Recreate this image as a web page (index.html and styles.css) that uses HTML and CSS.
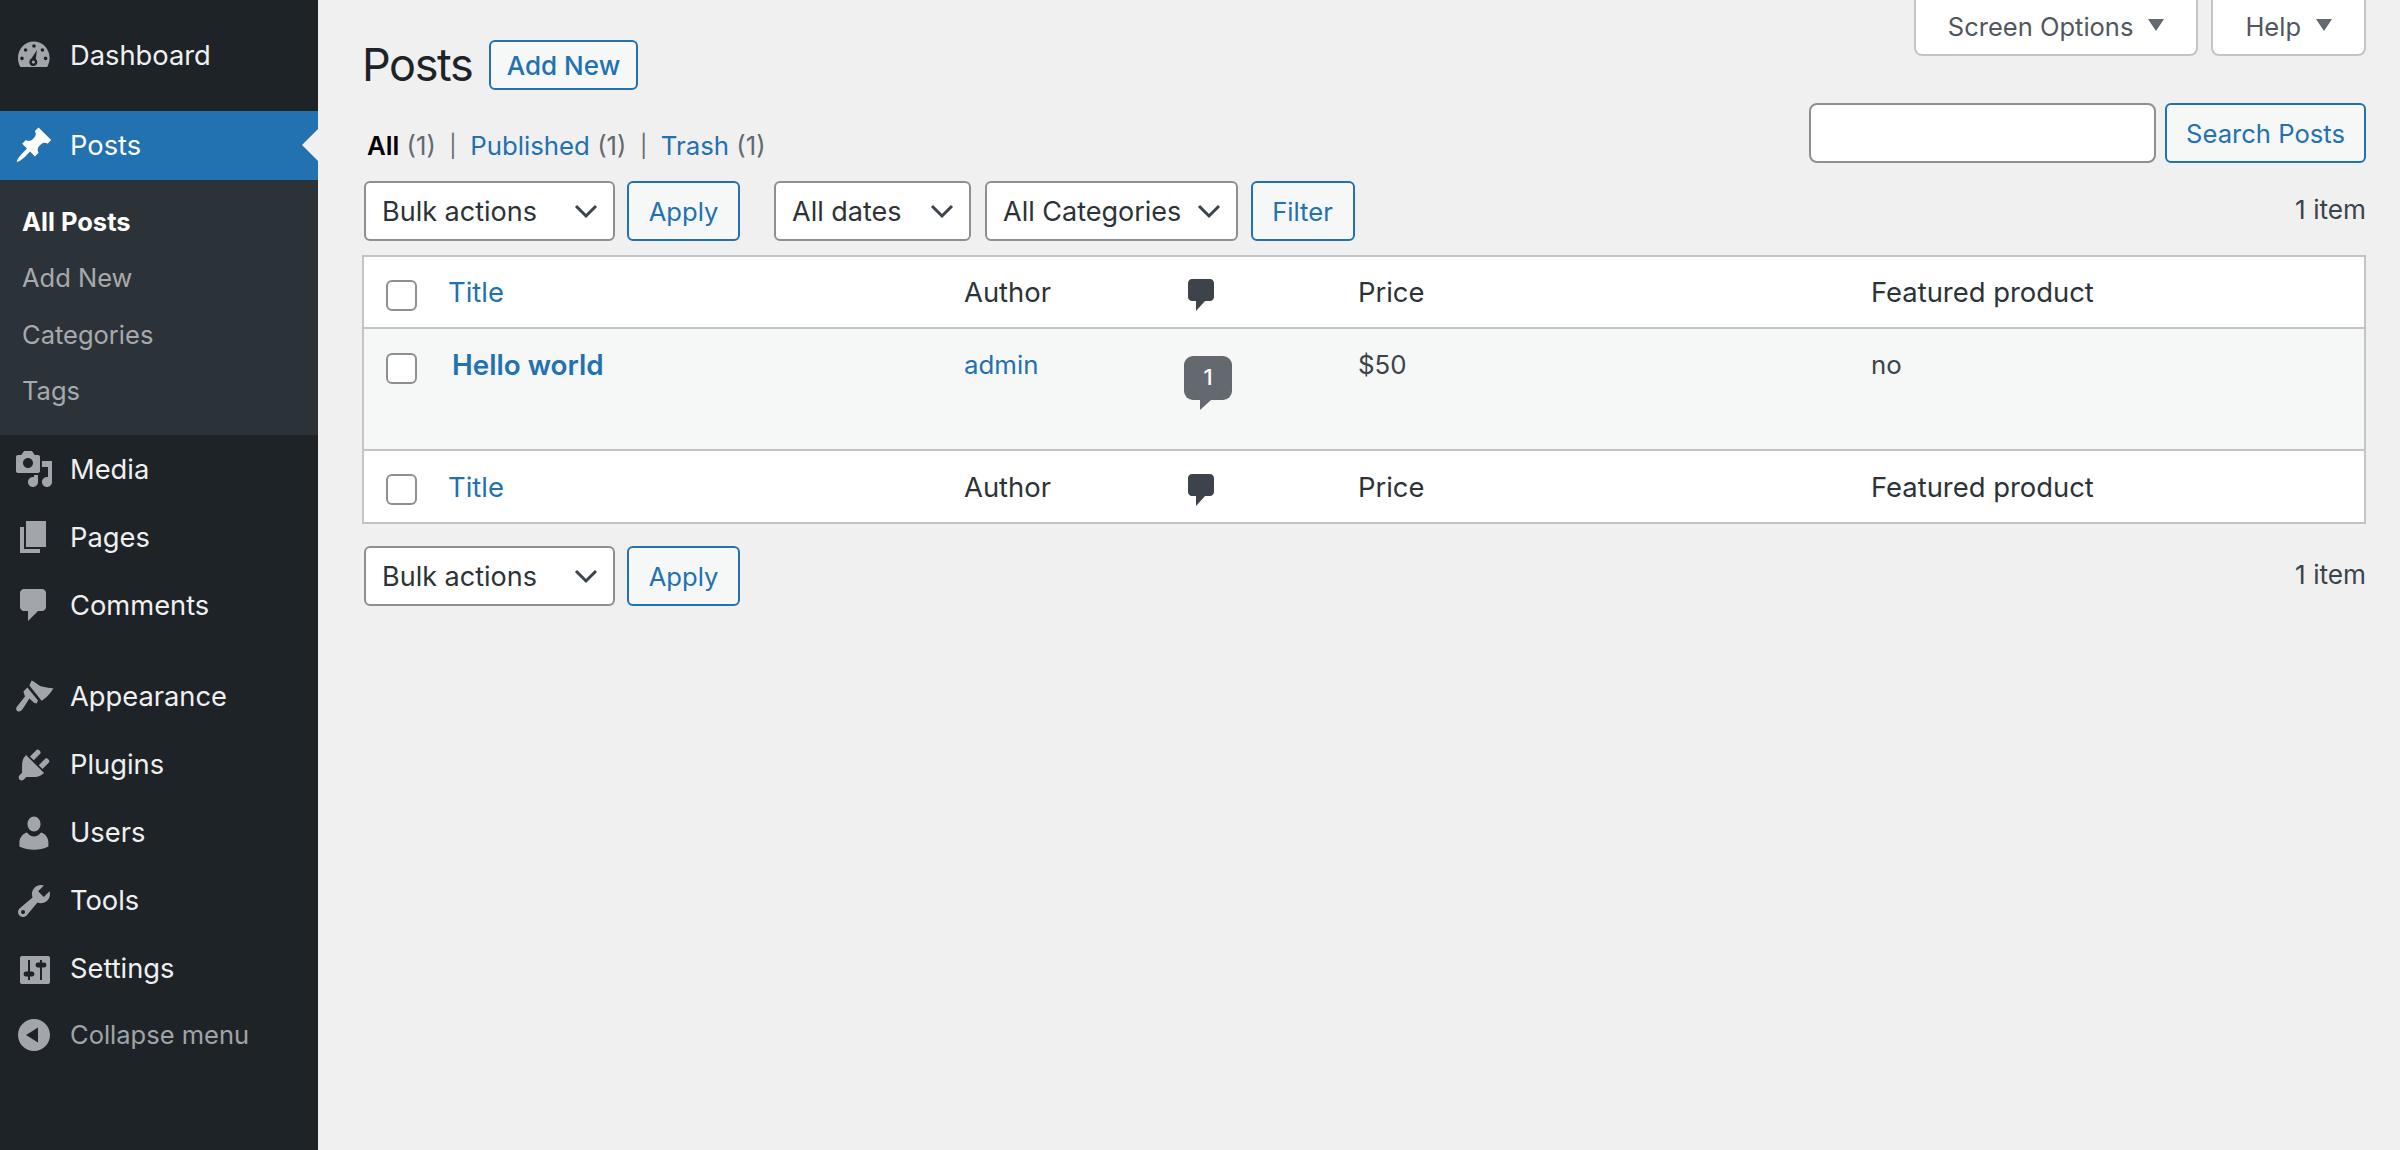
FILE: index.html
```html
<!DOCTYPE html>
<html lang="en">
<head>
<meta charset="utf-8">
<title>Posts</title>
<link rel="stylesheet" href="styles.css">
</head>
<body>
<div class="layout">
  <nav class="sidebar">
    <ul class="menu menu-top">
      <li class="menu-item"><svg class="ico" viewBox="0 0 20 20"><path fill-rule="evenodd" d="M3.200 15.500C2.400 14.200 2 12.700 2 11 2 6.500 5.500 2.800 9.900 2.800S17.800 6.500 17.800 11C17.800 12.700 17.300 14.200 16.600 15.500zM10 4.100a.9.9 0 1 0 0 1.800.9.9 0 0 0 0-1.800zM5.800 6.100a.9.9 0 1 0 0 1.800.9.9 0 0 0 0-1.800zM14.200 6.100a.9.9 0 1 0 0 1.800.9.9 0 0 0 0-1.800zM4 10.300a.9.9 0 1 0 0 1.800.9.9 0 0 0 0-1.800zM15.800 10.300a.9.9 0 1 0 0 1.800.9.9 0 0 0 0-1.800zM11.500 7L10.900 11.500A2 2 0 1 1 8.700 11.300zM9.700 12.200a.8.8 0 1 0 0 1.600.8.8 0 0 0 0-1.600z"/></svg><span>Dashboard</span></li>
    </ul>
    <div class="menu-current">
      <div class="menu-item current"><svg class="ico" viewBox="0 0 20 20"><path d="M10.440 3.020l1.820-1.820 6.360 6.350-1.830 1.820c-1.050-.68-2.480-.57-3.410.36l-.75.75c-.92.930-1.040 2.350-.35 3.410l-1.830 1.820-2.410-2.410-2.800 2.790c-.42.420-3.380 2.710-3.800 2.290s1.860-3.390 2.280-3.810l2.790-2.790L4.100 9.360l1.830-1.820c1.050.69 2.480.57 3.400-.36l.75-.75c.93-.92 1.050-2.350.36-3.410z"/></svg><span>Posts</span></div>
      <ul class="submenu">
        <li class="sub-active">All Posts</li>
        <li>Add New</li>
        <li>Categories</li>
        <li>Tags</li>
      </ul>
    </div>
    <ul class="menu">
      <li class="menu-item"><svg class="ico" viewBox="0 0 20 20"><path d="M13 11V4c0-.55-.45-1-1-1h-1.670L9 1H5L3.670 3H2c-.55 0-1 .45-1 1v7c0 .55.45 1 1 1h10c.55 0 1-.45 1-1zM7 4.500c1.380 0 2.500 1.120 2.500 2.500S8.380 9.500 7 9.500 4.500 8.380 4.500 7 5.620 4.500 7 4.500zM14 6h5v10.500c0 1.380-1.120 2.500-2.500 2.500S14 17.880 14 16.500s1.120-2.500 2.500-2.500c.17 0 .34.020.5.050V9h-3V6zm-4 8.050V13h2v3.500c0 1.380-1.120 2.500-2.500 2.500S7 17.880 7 16.500 8.120 14 9.500 14c.17 0 .34.020.5.050z"/></svg><span>Media</span></li>
      <li class="menu-item"><svg class="ico" viewBox="0 0 20 20"><path d="M6 15V2h10v13H6zm-1 1h8v2H3V5h2v11z"/></svg><span>Pages</span></li>
      <li class="menu-item"><svg class="ico" viewBox="0 0 20 20"><path d="M5 2h9c1.100 0 2 .9 2 2v7c0 1.100-.9 2-2 2h-2l-5 5v-5H5c-1.100 0-2-.9-2-2V4c0-1.100.9-2 2-2z"/></svg><span>Comments</span></li>
    </ul>
    <ul class="menu menu-second">
      <li class="menu-item"><svg class="ico" viewBox="0 0 20 20"><path d="M8.800 1.800C11 2.800 12.500 4.800 14.700 4.900 16.500 5.300 18.200 5.700 19.700 5.600 18.500 8 16 10.500 13.800 11.900L7.700 4.300zM6.700 5.200L12 11.800 11.300 13.300 10 12.900 7.700 10.800 4.500 15.800C3.800 16.900 2.800 17.500 1.900 17.200 1 16.800.8 15.700 1.400 14.900L5.500 9.800 4.700 7.300z"/></svg><span>Appearance</span></li>
      <li class="menu-item"><svg class="ico" viewBox="0 0 20 20"><path d="M13.110 4.360L9.870 7.600 8 5.730l3.240-3.240c.35-.34 1.050-.2 1.560.32.52.51.66 1.210.31 1.550zm-8 1.770l.91-1.120 9.010 9.010-1.190.84c-.71.71-2.630 1.160-3.820 1.160H6.140L4.900 17.260c-.59.59-1.540.59-2.120 0-.59-.58-.59-1.530 0-2.120l1.240-1.240v-3.880c0-1.130.4-3.050 1.090-3.890zm7.260 3.970l3.240-3.240c.34-.35 1.040-.21 1.550.31.52.51.66 1.210.32 1.560l-3.240 3.240z"/></svg><span>Plugins</span></li>
      <li class="menu-item"><svg class="ico" viewBox="0 0 20 20"><ellipse cx="10" cy="5.500" rx="3.300" ry="3.700"/><path d="M2.700 16.800V14.800C2.700 12.300 4.500 10.400 6.500 9.800 7.500 11.100 8.700 11.800 10 11.800S12.500 11.100 13.500 9.800C15.500 10.400 17.200 12.300 17.200 14.800V16.800C15 17.900 12.500 18.400 10 18.400S5 17.900 2.700 16.800z"/></svg><span>Users</span></li>
      <li class="menu-item"><svg class="ico" viewBox="0 0 20 20"><path d="M16.680 9.770c-1.340 1.340-3.300 1.670-4.950.99l-5.410 6.520c-.99.99-2.590.99-3.580 0s-.99-2.590 0-3.580l6.520-5.410c-.68-1.650-.35-3.610.99-4.950 1.280-1.280 3.120-1.620 4.720-1.060l-2.890 2.890 2.820 2.820 2.860-2.870c.53 1.580.18 3.390-1.080 4.650zM3.810 16.210c.4.39 1.040.39 1.430 0 .4-.4.4-1.040 0-1.430-.39-.4-1.030-.4-1.430 0-.39.39-.39 1.030 0 1.430z"/></svg><span>Tools</span></li>
      <li class="menu-item"><svg class="ico" viewBox="0 0 20 20"><path fill-rule="evenodd" d="M4 3.500h13c.6 0 1 .4 1 1v12c0 .6-.4 1-1 1H4c-.6 0-1-.4-1-1v-12c0-.6.4-1 1-1zM7 5.500h1v5.800h1c.8 0 1.200.5 1.200 1.200S9.800 13.700 9 13.700H8v1.800H7v-1.800H6c-.8 0-1.200-.5-1.200-1.200s.4-1.200 1.200-1.200h1zM13 5.500h1v1.300h1c.8 0 1.200.5 1.200 1.200s-.4 1.200-1.200 1.200h-1v6.300h-1V9.200h-1c-.8 0-1.200-.5-1.200-1.200s.4-1.200 1.200-1.200h1z"/></svg><span>Settings</span></li>
      <li class="menu-item collapse"><svg class="ico" viewBox="0 0 20 20"><path fill-rule="evenodd" d="M18 10c0-4.420-3.580-8-8-8s-8 3.580-8 8 3.580 8 8 8 8-3.580 8-8zm-6-3.800v7.600L6 10z"/></svg><span>Collapse menu</span></li>
    </ul>
  </nav>

  <main class="wrap">
    <div class="screen-meta">
      <div class="meta-tab">Screen Options<i class="tri"></i></div>
      <div class="meta-tab">Help<i class="tri"></i></div>
    </div>
    <div class="title-row">
      <h1>Posts</h1>
      <a class="btn btn-add">Add New</a>
    </div>
    <div class="filter-row">
      <ul class="subsub">
        <li><b>All</b> <span>(1)</span></li>
        <li class="sep">|</li>
        <li><a>Published</a> <span>(1)</span></li>
        <li class="sep">|</li>
        <li><a>Trash</a> <span>(1)</span></li>
      </ul>
      <div class="search">
        <input class="search-input" type="search" aria-label="Search Posts">
        <button class="btn btn-search">Search Posts</button>
      </div>
    </div>
    <div class="tablenav tablenav-top">
      <select class="sel sel-bulk"><option>Bulk actions</option></select>
      <button class="btn btn-apply">Apply</button>
      <select class="sel sel-dates"><option>All dates</option></select>
      <select class="sel sel-cats"><option>All Categories</option></select>
      <button class="btn btn-filter">Filter</button>
      <span class="count">1 item</span>
    </div>
    <table class="posts">
      <colgroup>
        <col class="c-cb"><col class="c-title"><col class="c-author"><col class="c-comments"><col class="c-price"><col class="c-feat">
      </colgroup>
      <thead>
        <tr class="head-row">
          <th class="cb"><input class="check" type="checkbox" aria-label="Select all"></th>
          <th><a>Title</a></th>
          <th>Author</th>
          <th><svg class="cmt" viewBox="0 0 26 32"><path d="M4 0h18c2.200 0 4 1.800 4 4v14c0 2.200-1.800 4-4 4h-5l-9 10V22H4c-2.200 0-4-1.800-4-4V4C0 1.800 1.800 0 4 0z"/></svg></th>
          <th>Price</th>
          <th>Featured product</th>
        </tr>
      </thead>
      <tbody>
        <tr class="body-row">
          <td class="cb"><input class="check" type="checkbox" aria-label="Select Hello world"></td>
          <td><a class="post-title">Hello world</a></td>
          <td><a>admin</a></td>
          <td><span class="bubble">1</span></td>
          <td>$50</td>
          <td>no</td>
        </tr>
      </tbody>
      <tfoot>
        <tr class="foot-row">
          <th class="cb"><input class="check" type="checkbox" aria-label="Select all"></th>
          <th><a>Title</a></th>
          <th>Author</th>
          <th><svg class="cmt" viewBox="0 0 26 32"><path d="M4 0h18c2.200 0 4 1.800 4 4v14c0 2.200-1.800 4-4 4h-5l-9 10V22H4c-2.200 0-4-1.800-4-4V4C0 1.800 1.800 0 4 0z"/></svg></th>
          <th>Price</th>
          <th>Featured product</th>
        </tr>
      </tfoot>
    </table>
    <div class="tablenav tablenav-bottom">
      <select class="sel sel-bulk"><option>Bulk actions</option></select>
      <button class="btn btn-apply">Apply</button>
      <span class="count">1 item</span>
    </div>
  </main>
</div>
</body>
</html>
```

FILE: styles.css
```css
* { box-sizing: border-box; }
html, body { margin: 0; height: 100%; }
body {
  background: #f0f0f1;
  color: #3c434a;
  font-family: Inter, "Liberation Sans", sans-serif;
  font-size: 25.6px;
  overflow: hidden;
}
ul { list-style: none; margin: 0; padding: 0; }
a { color: #2271b1; }

.layout { display: flex; height: 1150px; }

/* Sidebar */
.sidebar {
  flex: 0 0 318px;
  background: #1d2327;
  color: #f0f0f1;
  padding-top: 22px;
}
.menu-top { margin-bottom: 20.9px; }
.menu-item {
  display: flex;
  align-items: center;
  height: 68.1px;
  padding-left: 14px;
  font-size: 27.3px;
  line-height: 1;
}
.ico { width: 40px; height: 40px; flex: none; margin-right: 16px; fill: #a2a6aa; }
.current { position: relative; height: 69px; background: #2271b1; color: #fff; }
.current .ico { fill: #fff; }
.current::after {
  content: "";
  position: absolute;
  right: 0;
  top: 50%;
  margin-top: -16px;
  border: 16px solid transparent;
  border-right-color: #f0f0f1;
  border-left-width: 0;
}
.submenu { background: #2c3338; padding: 14px 0 16px; color: #a7aaad; font-size: 25.5px; }
.submenu li { height: 56.3px; line-height: 56px; padding-left: 22px; }
.sub-active { color: #fff; font-weight: 700; }
.menu-second { margin-top: 23px; }
.collapse { color: #a0a4a8; font-size: 25.5px; margin-top: -2px; }

/* Main */
.wrap { flex: 1; min-width: 0; padding: 0 34px 0 44px; }
.screen-meta { float: right; display: flex; gap: 13px; }
.meta-tab {
  display: flex;
  align-items: center;
  height: 57px;
  margin-top: -1px;
  padding: 0 32px;
  background: #fff;
  border: 2px solid #c3c4c7;
  border-top: 0;
  border-radius: 0 0 8px 8px;
  color: #50575e;
  font-size: 25.5px;
}
.tri {
  margin-left: 15px;
  margin-top: -4px;
  border-style: solid;
  border-width: 12px 8px 0;
  border-color: #646970 transparent transparent;
}
.title-row { display: flex; align-items: center; padding-top: 40px; height: 90px; }
h1 { margin: 0 18px 0 0; width: 109px; font-size: 45px; font-weight: 400; color: #1d2327; line-height: 50px; letter-spacing: -1.4px; }
.btn {
  display: inline-flex;
  align-items: center;
  justify-content: center;
  background: #f6f7f7;
  border: 2px solid #2271b1;
  border-radius: 6px;
  color: #2271b1;
  font: inherit;
  padding: 0;
}
.btn-add { width: 149px; height: 50px; font-size: 26px; font-weight: 500; }
.filter-row { display: flex; justify-content: space-between; margin-top: 13px; height: 60px; }
.subsub { display: flex; gap: 13.5px; align-self: flex-start; margin: 25px 0 0 5px; line-height: 36px; color: #646970; font-size: 25.8px; }
.subsub b { color: #000; font-weight: 600; }
.subsub .sep { color: #646970; font-size: 22px; }
.search { display: flex; gap: 9px; }
.search-input {
  width: 347px;
  height: 60px;
  background: #fff;
  border: 2px solid #8c8f94;
  border-radius: 8px;
  margin: 0;
}
.btn-search { width: 201px; height: 60px; }
.tablenav { display: flex; align-items: center; height: 60px; }
.tablenav-top { margin-top: 18px; }
.tablenav-bottom { margin-top: 22px; }
.sel {
  appearance: none;
  -webkit-appearance: none;
  height: 60px;
  background: #fff url("data:image/svg+xml;utf8,<svg xmlns='http://www.w3.org/2000/svg' viewBox='0 0 24 24'><path d='M2 7l10 10L22 7' fill='none' stroke='%233c434a' stroke-width='3'/></svg>") no-repeat right 15px center / 24px 24px;
  border: 2px solid #8c8f94;
  border-radius: 6px;
  color: #2c3338;
  font: inherit;
  font-size: 27px;
  padding: 0 0 0 16px;
  margin: 0;
}
.sel-bulk { width: 251px; margin-left: 2px; }
.btn-apply { width: 113px; height: 60px; margin-left: 12px; }
.sel-dates { width: 197px; margin-left: 34px; }
.sel-cats { width: 253px; margin-left: 14px; }
.btn-filter { width: 104px; height: 60px; margin-left: 12.5px; }
.count { margin-left: auto; font-size: 26.2px; position: relative; top: -2px; }

.posts {
  width: 2004px;
  margin-top: 14px;
  table-layout: fixed;
  border-collapse: separate;
  border-spacing: 0;
  background: #fff;
  border: 2px solid #c3c4c7;
}
.c-cb { width: 68px; }
.c-title { width: 516px; }
.c-author { width: 220px; }
.c-comments { width: 174px; }
.c-price { width: 513px; }
.posts th, .posts td { padding: 0 0 0 16px; text-align: left; font-weight: 400; }
.posts th { color: #2c3338; font-size: 27.4px; }
.posts .cb { padding-left: 22px; }
.head-row { height: 72px; }
.foot-row { height: 73px; }
thead th { border-bottom: 2px solid #c3c4c7; }
tfoot th { border-top: 2px solid #c3c4c7; padding-top: 3px; }
.body-row { height: 120px; background: #f6f7f7; }
.body-row td { vertical-align: top; padding-top: 16px; line-height: 40px; font-size: 25.8px; }
.posts .body-row .cb { padding-top: 24px; line-height: 0; }
.check {
  appearance: none;
  -webkit-appearance: none;
  display: block;
  width: 31px;
  height: 31px;
  margin: 0;
  background: #fff;
  border: 2px solid #8c8f94;
  border-radius: 6px;
}
th .check { margin-top: 6px; }
.post-title { margin-left: 4px; font-size: 27.8px; font-weight: 600; }
.cmt { display: block; width: 26px; height: 32px; margin: 6px 0 0 4px; fill: #3c434a; }
.bubble {
  position: relative;
  display: block;
  width: 48px;
  height: 44px;
  margin-top: 11px;
  background: #646970;
  border-radius: 9px;
  color: #fff;
  font-size: 22px;
  font-weight: 500;
  line-height: 43px;
  text-align: center;
}
.bubble::after {
  content: "";
  position: absolute;
  left: 16px;
  top: 44px;
  border-top: 10px solid #646970;
  border-right: 11px solid transparent;
}
```
